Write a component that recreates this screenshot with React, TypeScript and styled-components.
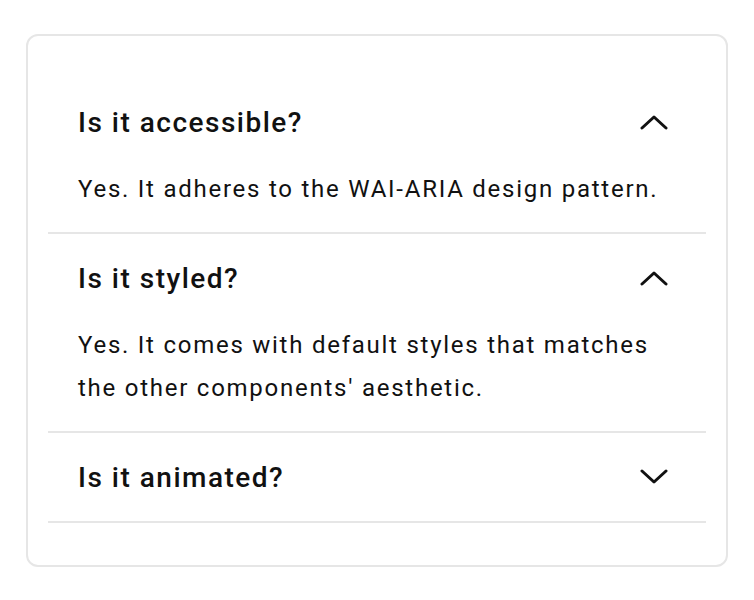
import React from 'react';
import styled, {createGlobalStyle} from "styled-components";

const GlobalStyle = createGlobalStyle`
    body {
        margin: 0;
        background: #ffffff;
        font-family: Roboto, "Liberation Sans", sans-serif;
        color: #111111;
    }
`;

type Item = {
    question: string;
    answer?: string;
    open: boolean;
};

const items: Item[] = [
    {question: 'Is it accessible?', answer: 'Yes. It adheres to the WAI-ARIA design pattern.', open: true},
    {question: 'Is it styled?', answer: "Yes. It comes with default styles that matches the other components' aesthetic.", open: true},
    {question: 'Is it animated?', open: false},
];

const Chevron = ({up}: { up: boolean }) => (
    <svg width="28" height="16" viewBox="0 0 28 16" fill="none">
        <polyline
            points={up ? "2,14 14,3 26,14" : "2,2 14,13 26,2"}
            stroke="#111111"
            strokeWidth="3"
            strokeLinecap="round"
            strokeLinejoin="round"
        />
    </svg>
);

export default function App() {
    return (
        <>
            <GlobalStyle/>
            <Page>
                <Card>
                    {items.map((item) => (
                        <Section key={item.question}>
                            <Trigger>
                                <Question>{item.question}</Question>
                                <Chevron up={item.open}/>
                            </Trigger>
                            {item.open && item.answer && <Answer>{item.answer}</Answer>}
                        </Section>
                    ))}
                </Card>
            </Page>
        </>
    );
}

const Page = styled.div`
    padding: 34px 26px;
`;

const Card = styled.div`
    box-sizing: border-box;
    width: 702px;
    height: 533px;
    border: 2px solid #e6e6e6;
    border-radius: 12px;
    padding: 42px 20px 0;
`;

const Section = styled.div`
    border-bottom: 2px solid #e6e6e6;
`;

const Trigger = styled.div`
    display: flex;
    align-items: center;
    justify-content: space-between;
    height: 88px;
    padding: 0 38px 0 30px;
`;

const Question = styled.h3`
    margin: 0;
    font-size: 28px;
    font-weight: 500;
    letter-spacing: 1.5px;
`;

const Answer = styled.p`
    margin: 0;
    padding: 2px 40px 21px 30px;
    font-size: 24px;
    line-height: 43px;
    letter-spacing: 1.75px;
`;
